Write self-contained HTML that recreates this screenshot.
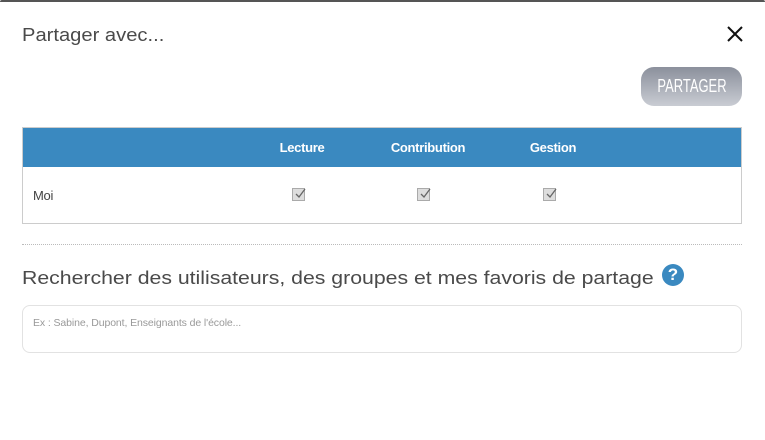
<!DOCTYPE html>
<html><head><meta charset="utf-8"><style>
*{margin:0;padding:0;box-sizing:border-box}
body{width:765px;height:440px;background:#fff;font-family:"Liberation Sans",sans-serif;position:relative;overflow:hidden}
.top{position:absolute;left:0;top:0;width:765px;height:2px;background:#555;border-radius:3px 3px 0 0}
.t{position:absolute;color:#4a4a4a;font-size:18px;white-space:nowrap;transform-origin:0 0}
.btn{position:absolute;left:641px;top:67px;width:101px;height:39px;border-radius:13px;background:linear-gradient(#8b909c,#c9ccd3)}
.btn span{position:absolute;left:50%;top:0;color:#fff;font-size:18px;line-height:39px;white-space:nowrap;transform:translateX(-50%) scaleX(.72)}
.tbl{position:absolute;left:22px;top:127px;width:720px;height:97px;border:1px solid #ccc}
.hd{position:absolute;left:0;top:0;width:718px;height:39px;background:#3a89c0}
.h{position:absolute;top:12px;color:#fff;font-weight:bold;font-size:13px;letter-spacing:-0.3px;transform:translateX(-50%)}
.cb{position:absolute;top:60px;width:13px;height:13px;background:#ddd;border:1px solid #aaa}
.cb svg{position:absolute;left:1px;top:-2px}
.sep{position:absolute;left:22px;top:244px;width:720px;border-top:1px dotted #bbb}
.q{position:absolute;left:662px;top:264px;width:22px;height:22px;border-radius:50%;background:#3a89c0;color:#fff;font-weight:bold;font-size:17px;line-height:22px;text-align:center}
.inp{position:absolute;left:22px;top:305px;width:720px;height:48px;border:1px solid #e2e2e2;border-radius:8px}
.ph{position:absolute;left:10px;top:11px;color:#999;font-size:10.5px;letter-spacing:-0.1px}
</style></head><body>
<div class="top"></div>
<div class="t" style="left:22px;top:25px;transform:scaleX(1.12)">Partager avec...</div>
<svg style="position:absolute;left:727px;top:26px" width="16" height="16"><path d="M1 1L15 15M15 1L1 15" stroke="#111" stroke-width="2"/></svg>
<div class="btn"><span>PARTAGER</span></div>
<div class="tbl">
<div class="hd">
<div class="h" style="left:279px">Lecture</div>
<div class="h" style="left:405px">Contribution</div>
<div class="h" style="left:530px">Gestion</div>
</div>
<div style="position:absolute;left:10px;top:60px;font-size:13px;color:#444;letter-spacing:-0.3px">Moi</div>
<div class="cb" style="left:269px"><svg width="12" height="12"><path d="M2 7L5 10L11 2" stroke="#666" stroke-width="1.3" fill="none"/></svg></div>
<div class="cb" style="left:394px"><svg width="12" height="12"><path d="M2 7L5 10L11 2" stroke="#666" stroke-width="1.3" fill="none"/></svg></div>
<div class="cb" style="left:520px"><svg width="12" height="12"><path d="M2 7L5 10L11 2" stroke="#666" stroke-width="1.3" fill="none"/></svg></div>
</div>
<div class="sep"></div>
<div class="t" style="left:22px;top:268px;transform:scaleX(1.18)">Rechercher des utilisateurs, des groupes et mes favoris de partage</div>
<div class="q">?</div>
<div class="inp"><div class="ph">Ex : Sabine, Dupont, Enseignants de l'école...</div></div>
</body></html>
